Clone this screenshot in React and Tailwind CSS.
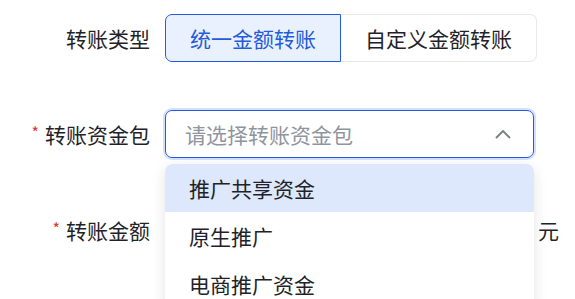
import { useState } from "react";

const OPTIONS = ["推广共享资金", "原生推广", "电商推广资金"];

function Label({ required, children }) {
  return (
    <div className="w-[150px] shrink-0 flex items-center justify-end text-[21px] text-[#1f2329]">
      {required && <span className="text-[#d83931] text-[16px] mr-[6px] -mt-[4px]">*</span>}
      {children}
    </div>
  );
}

export default function App() {
  const [mode, setMode] = useState("unified");
  const [open] = useState(true);

  return (
    <div className="w-[575px] h-[299px] bg-white overflow-hidden font-['Noto_Sans_CJK_SC',sans-serif] leading-none">
      {/* 转账类型 */}
      <div className="flex items-center gap-[15px] h-12 mt-[14px]">
        <Label>转账类型</Label>
        <div className="flex h-12 text-[21px]">
          <button
            onClick={() => setMode("unified")}
            className={`w-[176px] h-12 rounded-l-[7px] border ${
              mode === "unified"
                ? "border-[#245bdb] bg-[#eaf1fe] text-[#245bdb]"
                : "border-[#dee0e3] text-[#1f2329]"
            }`}
          >
            统一金额转账
          </button>
          <button
            onClick={() => setMode("custom")}
            className={`w-[196px] h-12 rounded-r-[7px] border border-l-0 ${
              mode === "custom"
                ? "border-[#245bdb] bg-[#eaf1fe] text-[#245bdb]"
                : "border-[#e8e9eb] text-[#1f2329]"
            }`}
          >
            自定义金额转账
          </button>
        </div>
      </div>

      {/* 转账资金包 */}
      <div className="flex items-center gap-[15px] h-12 mt-12">
        <Label required>转账资金包</Label>
        <div className="relative w-[369px] h-12">
          <div className="h-12 flex items-center justify-between pl-[19px] pr-[22px] rounded-[7px] border border-[#245bdb] ring-2 ring-[#d3e0fc] text-[21px] text-[#8f959e]">
            <span>请选择转账资金包</span>
            <svg width="16" height="10" viewBox="0 0 16 10" fill="none" stroke="#7a7f86" strokeWidth="1.8" strokeLinecap="round" strokeLinejoin="round">
              <polyline points="1.5 8.5 8 2 14.5 8.5" />
            </svg>
          </div>
          {open && (
            <div className="absolute left-0 top-[54px] w-[369px] z-10 bg-white rounded-[8px] shadow-[0_4px_14px_rgba(31,35,41,0.12)] overflow-hidden">
              {OPTIONS.map((o, i) => (
                <div
                  key={o}
                  className={`h-12 flex items-center px-6 text-[21px] text-[#1f2329] ${i === 0 ? "bg-[#dde8fd]" : ""}`}
                >
                  {o}
                </div>
              ))}
            </div>
          )}
        </div>
      </div>

      {/* 转账金额 */}
      <div className="flex items-center gap-[15px] h-12 mt-12">
        <Label required>转账金额</Label>
        <div className="flex items-center gap-[13px]">
          <input className="w-[360px] h-12 rounded-[7px] border border-[#dee0e3] px-5 text-[21px] outline-none" />
          <span className="text-[21px] text-[#1f2329]">元</span>
        </div>
      </div>
    </div>
  );
}
